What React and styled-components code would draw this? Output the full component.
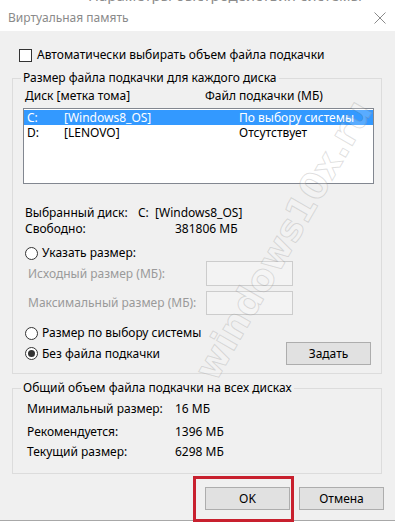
import React from 'react';
import styled, { createGlobalStyle } from 'styled-components';

const GlobalStyle = createGlobalStyle`
  html, body {
    margin: 0;
    padding: 0;
    background: #ffffff;
  }
  body {
    font-family: "Noto Sans", "Open Sans", sans-serif;
    font-size: 12px;
    color: #000000;
  }
`;

const Page = styled.div`
  position: relative;
  width: 395px;
  height: 524px;
  overflow: hidden;
  background: #ffffff;
`;

const TopSliver = styled.div`
  height: 4px;
  overflow: hidden;
  padding-left: 88px;
  color: #8c8c8c;
  font-size: 15px;
  line-height: 15px;

  span {
    display: block;
    margin-top: -12px;
  }
`;

const TitleBar = styled.div`
  height: 27px;
  display: flex;
  align-items: center;
  justify-content: space-between;
  padding: 0 9px 0 8px;
  background: #ffffff;
  color: #8a8a8a;
  font-size: 12px;
`;

const Body = styled.div`
  background: #f0f0f0;
  height: 490px;
  box-sizing: border-box;
  padding: 17px 11px 0 12px;
  border-bottom: 1px solid #a8a8a8;
`;

const CheckRow = styled.label`
  display: flex;
  align-items: center;
  gap: 5px;
  height: 14px;
  margin-left: 7px;
  line-height: 14px;
`;

const CheckBox = styled.span`
  width: 11px;
  height: 11px;
  border: 1px solid #333333;
  background: #ffffff;
  flex: none;
`;

const Group = styled.fieldset`
  margin: ${p => p.$top}px 2px 0 0;
  padding: 0 10px ${p => p.$bottom}px 10px;
  border: 1px solid #dcdcdc;
  min-width: 0;
`;

const Legend = styled.legend`
  padding: 0 2px;
  margin-left: -2px;
  line-height: 16px;
  height: 16px;
`;

const Row = styled.div`
  display: flex;
  align-items: center;
  height: ${p => p.$h || 16}px;
  line-height: 16px;
  margin-top: ${p => p.$mt || 0}px;
  padding-left: ${p => p.$pl ?? 2}px;
  color: ${p => (p.$disabled ? '#9a9a9a' : '#000000')};
  white-space: nowrap;
`;

const Cell = styled.span`
  width: ${p => p.$w}px;
  flex: none;
`;

const ListBox = styled.div`
  margin: 4px -3px 0 0;
  height: 76px;
  box-sizing: border-box;
  border: 1px solid #828790;
  background: #ffffff;
  padding-top: 1px;
`;

const ListRow = styled.div`
  display: flex;
  align-items: center;
  height: 15px;
  line-height: 15px;
  padding-left: 3px;
  background: ${p => (p.$selected ? '#3399ff' : 'transparent')};
  color: ${p => (p.$selected ? '#ffffff' : '#000000')};
  white-space: nowrap;
`;

const Radio = styled.span`
  width: 11px;
  height: 11px;
  border: 1px solid #333333;
  border-radius: 50%;
  background: #ffffff;
  display: inline-flex;
  align-items: center;
  justify-content: center;
  margin-right: 4px;
  flex: none;

  &::after {
    content: '';
    display: ${p => (p.$checked ? 'block' : 'none')};
    width: 7px;
    height: 7px;
    border-radius: 50%;
    background: #333333;
  }
`;

const Field = styled.div`
  width: 87px;
  height: ${p => p.$h}px;
  box-sizing: border-box;
  border: 1px solid #cccccc;
  background: #f3f3f3;
  margin-left: auto;
  margin-right: 78px;
`;

const Button = styled.button`
  width: 85px;
  height: 23px;
  border: 1px solid #adadad;
  background: #e1e1e1;
  font: inherit;
  color: #000000;
  padding: 0;
`;

const SetButton = styled(Button)`
  margin-left: auto;
`;

const Footer = styled.div`
  display: flex;
  justify-content: flex-end;
  gap: 9px;
  margin-top: 13px;
`;

const Highlight = styled.div`
  position: relative;
  display: flex;

  &::before {
    content: '';
    position: absolute;
    top: -11px;
    bottom: -12px;
    left: -12px;
    right: -4px;
    border: 3px solid #c8202e;
    pointer-events: none;
  }
`;

const Watermark = styled.div`
  position: absolute;
  left: 130px;
  top: 222px;
  width: 300px;
  height: 50px;
  line-height: 50px;
  text-align: center;
  transform: rotate(-60deg);
  font-family: "DejaVu Sans", sans-serif;
  font-weight: bold;
  font-size: 37px;
  color: rgba(255, 255, 255, 0.2);
  -webkit-text-stroke: 1px rgba(130, 130, 130, 0.25);
  pointer-events: none;
  white-space: nowrap;
`;

const CloseIcon = () => (
  <svg width="12" height="12" viewBox="0 0 12 12">
    <path d="M0.5 0.5 L11.5 11.5 M11.5 0.5 L0.5 11.5" stroke="#8a8a8a" strokeWidth="1" fill="none" />
  </svg>
);

export default function App() {
  return (
    <Page>
      <GlobalStyle />
      <TopSliver><span>Параметры быстродействия системы</span></TopSliver>
      <TitleBar>
        <span>Виртуальная память</span>
        <CloseIcon />
      </TitleBar>
      <Body>
        <CheckRow>
          <CheckBox />
          Автоматически выбирать объем файла подкачки
        </CheckRow>
        <Group $top={8} $bottom={8}>
          <Legend>Размер файла подкачки для каждого диска</Legend>
          <Row $mt={2}>
            <Cell $w={180}>Диск [метка тома]</Cell>
            <span>Файл подкачки (МБ)</span>
          </Row>
          <ListBox>
            <ListRow $selected>
              <Cell $w={37}>C:</Cell>
              <Cell $w={175}>[Windows8_OS]</Cell>
              <span>По выбору системы</span>
            </ListRow>
            <ListRow>
              <Cell $w={37}>D:</Cell>
              <Cell $w={175}>[LENOVO]</Cell>
              <span>Отсутствует</span>
            </ListRow>
          </ListBox>
          <Row $mt={21}>
            <Cell $w={113}>Выбранный диск:</Cell>
            <span>C:&nbsp;&nbsp;[Windows8_OS]</span>
          </Row>
          <Row>
            <Cell $w={150}>Свободно:</Cell>
            <span>381806 МБ</span>
          </Row>
          <Row $mt={8}>
            <Radio />
            Указать размер:
          </Row>
          <Row $h={25} $pl={5} $disabled>
            Исходный размер (МБ):
            <Field $h={25} />
          </Row>
          <Row $h={24} $mt={5} $pl={5} $disabled>
            Максимальный размер (МБ):
            <Field $h={24} />
          </Row>
          <Row $mt={10}>
            <Radio />
            Размер по выбору системы
          </Row>
          <Row $h={23} $mt={1}>
            <Radio $checked />
            Без файла подкачки
            <SetButton>Задать</SetButton>
          </Row>
        </Group>
        <Group $top={6} $bottom={13}>
          <Legend>Общий объем файла подкачки на всех дисках</Legend>
          <Row $mt={5} $pl={4}>
            <Cell $w={148}>Минимальный размер:</Cell>
            <span>16 МБ</span>
          </Row>
          <Row $mt={7} $pl={4}>
            <Cell $w={148}>Рекомендуется:</Cell>
            <span>1396 МБ</span>
          </Row>
          <Row $mt={4} $pl={4}>
            <Cell $w={148}>Текущий размер:</Cell>
            <span>6298 МБ</span>
          </Row>
        </Group>
        <Footer>
          <Highlight>
            <Button>OK</Button>
          </Highlight>
          <Button>Отмена</Button>
        </Footer>
      </Body>
      <Watermark>windows10x.ru</Watermark>
    </Page>
  );
}
